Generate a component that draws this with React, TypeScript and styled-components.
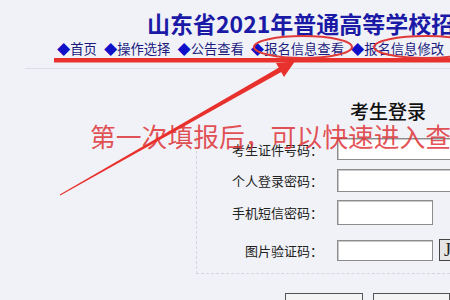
import * as React from 'react';
import styled, { createGlobalStyle } from 'styled-components';

const GlobalStyle = createGlobalStyle`
  html, body {
    margin: 0;
    padding: 0;
    background: #f1f2f7;
  }
  body {
    font-family: "Noto Sans CJK SC", "Noto Sans", sans-serif;
  }
`;

const Page = styled.div`
  position: relative;
  width: 450px;
  height: 300px;
  overflow: hidden;
  background: #f1f2f7;
`;

const Title = styled.h1`
  margin: 0;
  padding: 8px 0 0 147px;
  font-size: 23px;
  line-height: 30px;
  font-weight: bold;
  color: #1a1aa6;
  white-space: nowrap;
`;

const NavBar = styled.nav`
  display: flex;
  gap: 7px;
  padding-left: 57px;
  margin-top: 2px;
  height: 18px;
  font-size: 13.3px;
  line-height: 18px;
  color: #1c1c7e;
  white-space: nowrap;
`;

const NavItem = styled.span`
  &::before {
    content: '◆';
    color: #1010c8;
  }
`;

const Divider = styled.div`
  margin: 10px 0 0 25px;
  border-top: 1px solid #dcdde6;
`;

const Panel = styled.section`
  margin-left: 196px;
`;

const LoginTitle = styled.h2`
  margin: 0;
  padding: 30px 0 0 154px;
  font-size: 19px;
  line-height: 24px;
  font-weight: 500;
  color: #111;
  white-space: nowrap;
`;

const FormBox = styled.div`
  margin-top: 13px;
  padding: 2px 0 12px;
  border-left: 1px dashed #d6d7de;
  border-bottom: 1px dashed #d6d7de;
  display: grid;
  grid-template-columns: 126px auto;
  column-gap: 14px;
  align-items: center;
`;

const Label = styled.label<{ $gap: number }>`
  text-align: right;
  font-size: 13px;
  color: #222;
  white-space: nowrap;
  margin-top: ${p => p.$gap}px;
`;

const Field = styled.div<{ $gap: number }>`
  display: flex;
  align-items: center;
  gap: 6px;
  margin-top: ${p => p.$gap}px;
`;

const Input = styled.div<{ $w: number; $h: number }>`
  width: ${p => p.$w}px;
  height: ${p => p.$h}px;
  box-sizing: border-box;
  background: #fff;
  border: 1px solid #8c8c8c;
  box-shadow: inset 1px 1px 0 #c8c8c8;
`;

const Captcha = styled.div`
  width: 22px;
  height: 22px;
  box-sizing: border-box;
  border: 1px solid #444;
  background: #e6e6e6;
  font-family: "Liberation Serif", serif;
  font-size: 18px;
  line-height: 20px;
  padding-left: 4px;
  color: #222;
`;

const Buttons = styled.div`
  display: flex;
  gap: 10px;
  margin: 19px 0 0 89px;
`;

const Button = styled.div`
  width: 97px;
  height: 24px;
  box-sizing: border-box;
  border: 1px solid #555;
  background: #f4f4f4;
`;

const Note = styled.div`
  position: absolute;
  left: 90px;
  top: 120px;
  font-size: 25.8px;
  line-height: 32px;
  color: rgba(222, 52, 56, 0.86);
  white-space: nowrap;
`;

const Marks = styled.svg`
  position: absolute;
  left: 0;
  top: 0;
  pointer-events: none;
`;

const navItems = ['首页', '操作选择', '公告查看', '报名信息查看', '报名信息修改'];

const rows = [
  { label: '考生证件号码：', w: 140, h: 22, gap: 0 },
  { label: '个人登录密码：', w: 140, h: 23, gap: 9 },
  { label: '手机短信密码：', w: 96, h: 25, gap: 8 },
  { label: '图片验证码：', w: 96, h: 21, gap: 14, captcha: true },
];

const App = () => {
  return (
    <Page>
      <GlobalStyle />
      <Title>山东省2021年普通高等学校招生考试报名系统</Title>
      <NavBar>
        {navItems.map(item => (
          <NavItem key={item}>{item}</NavItem>
        ))}
      </NavBar>
      <Divider />
      <Panel>
        <LoginTitle>考生登录</LoginTitle>
        <FormBox>
          {rows.map(row => (
            <React.Fragment key={row.label}>
              <Label $gap={row.gap}>{row.label}</Label>
              <Field $gap={row.gap}>
                <Input $w={row.w} $h={row.h} />
                {row.captcha && <Captcha>J</Captcha>}
              </Field>
            </React.Fragment>
          ))}
        </FormBox>
        <Buttons>
          <Button />
          <Button />
        </Buttons>
      </Panel>
      <Note>第一次填报后，可以快速进入查看</Note>
      <Marks width="450" height="300" viewBox="0 0 450 300">
        <rect x="54" y="58" width="396" height="4.5" fill="#e8302c" />
        <ellipse cx="303" cy="47" rx="49" ry="11" fill="none" stroke="#e03a3a" strokeWidth="2" />
        <ellipse cx="426" cy="47" rx="52" ry="11" fill="none" stroke="#e03a3a" strokeWidth="2" />
        <polygon points="60.2,195.4 59.8,194.6 283.8,64.8 286.2,69.2" fill="#e8302c" />
        <polygon points="294.8,61.6 276,63 284,77" fill="#e8302c" />
      </Marks>
    </Page>
  );
};

export default App;
